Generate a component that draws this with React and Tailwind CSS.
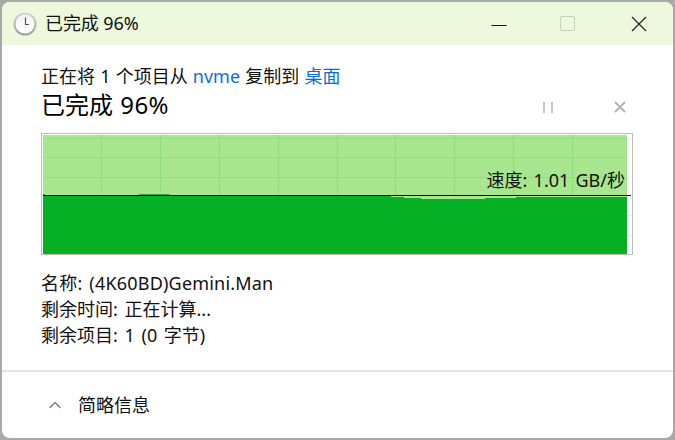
import { ChevronUp } from "lucide-react";

const font = { fontFamily: '"Noto Sans", "Noto Sans CJK SC", sans-serif' };

function Clock() {
  return (
    <svg width="24" height="24" viewBox="0 0 24 24" aria-hidden="true">
      <defs>
        <linearGradient id="rim" x1="0" y1="0" x2="0" y2="1">
          <stop offset="0" stopColor="#d8d8d8" />
          <stop offset="1" stopColor="#9c9c9c" />
        </linearGradient>
        <linearGradient id="face" x1="0" y1="0" x2="0" y2="1">
          <stop offset="0" stopColor="#f2f2f2" />
          <stop offset="1" stopColor="#ffffff" />
        </linearGradient>
      </defs>
      <circle cx="12" cy="12" r="11.5" fill="url(#rim)" />
      <circle cx="12" cy="12" r="9.5" fill="url(#face)" />
      <path d="M12.5 5.5V12.5H16" fill="none" stroke="#555" strokeWidth="1.2" />
    </svg>
  );
}

function Chart() {
  const vLines = [101.5, 160.5, 219.5, 278.5, 337.5, 395.5, 454.5, 513.5, 572.5];
  return (
    <svg width="590" height="120" viewBox="42 134 590 120" className="block" aria-hidden="true">
      <rect x="43" y="135" width="584" height="119" fill="#a9e690" />
      {vLines.map((x) => (
        <line key={x} x1={x} y1="135" x2={x} y2="195" stroke="#8fe07c" strokeWidth="1" />
      ))}
      {[138.5, 157.5, 177.5].map((y) => (
        <line key={y} x1="43" y1={y} x2="627" y2={y} stroke="#8fe07c" strokeWidth="1" />
      ))}
      <path
        d="M43 194H45V196H139V194H170V196H391V197H404V198H421V199H485V198H516V197H627V254H43Z"
        fill="#05b025"
      />
      <rect x="139" y="194" width="31" height="1" fill="#2fa83a" />
      <line x1="43" y1="195.5" x2="631" y2="195.5" stroke="#000" strokeWidth="1" />
      <line x1="627" y1="215.5" x2="632" y2="215.5" stroke="#eeeeee" strokeWidth="1" />
      <line x1="627" y1="235.5" x2="632" y2="235.5" stroke="#eeeeee" strokeWidth="1" />
    </svg>
  );
}

export default function App() {
  return (
    <div className="h-[440px] w-[675px] overflow-hidden bg-[#a9a9a9] p-[2px]" style={font}>
      <div className="flex h-full flex-col overflow-hidden rounded-lg bg-white text-[18px] leading-[26px] text-[#111]">
        <div className="flex h-[43px] shrink-0 items-center bg-[#eef8dc] pl-[11px]">
          <Clock />
          <span className="ml-[8px] -translate-y-[1px] text-[18px] tracking-[-0.1px]">已完成 96%</span>
          <div className="ml-auto flex items-center">
            <svg width="16" height="16" viewBox="0 0 16 16" className="mr-[53px]" aria-hidden="true">
              <line x1="0.5" y1="9.5" x2="15.5" y2="9.5" stroke="#111" strokeWidth="1" />
            </svg>
            <div className="mr-[56px] h-[15px] w-[15px] rounded-[2px] border border-[#c6d2b8]" />
            <svg width="16" height="16" viewBox="0 0 16 16" className="mr-[26px]" aria-hidden="true">
              <path d="M1 1L15 15M15 1L1 15" stroke="#222" strokeWidth="1.2" />
            </svg>
          </div>
        </div>

        <div className="flex flex-1 flex-col pl-[39px] pr-[39px] pt-[18px]">
          <p className="h-[26px] whitespace-nowrap [word-spacing:0.5px]">
            正在将 1 个项目从 <span className="text-[#0a6fd6]">nvme</span> 复制到{" "}
            <span className="text-[#0a6fd6]">桌面</span>
          </p>
          <div className="flex h-[32px] items-center">
            <h1 className="text-[24px] font-normal leading-[30px] text-black [word-spacing:1px]">
              已完成 <span className="tracking-[0.4px]">96%</span>
            </h1>
            <div className="ml-auto flex translate-y-[2px] items-center">
              <div className="mr-[60px] flex gap-[6px]">
                <div className="h-[11px] w-[2px] bg-[#c8c8c8]" />
                <div className="h-[11px] w-[2px] bg-[#c8c8c8]" />
              </div>
              <svg width="14" height="14" viewBox="0 0 14 14" className="mr-[7px]" aria-hidden="true">
                <path d="M2 2L12 12M12 2L2 12" stroke="#b4b4b4" strokeWidth="2" />
              </svg>
            </div>
          </div>

          <div className="relative mt-[12px] h-[122px] w-[592px] border border-[#bdbdbd] bg-white">
            <Chart />
            <span className="absolute right-[7px] top-[33px] whitespace-nowrap text-[18px] leading-[26px] [word-spacing:1.5px]">速度: 1.01 GB/秒</span>
          </div>

          <div className="mt-[15px] leading-[26px] [word-spacing:2px]">
            <p className="tracking-[0.2px]">名称: (4K60BD)Gemini.Man</p>
            <p>剩余时间: 正在计算...</p>
            <p>剩余项目: 1 (0 字节)</p>
          </div>
        </div>

        <div className="flex h-[68px] shrink-0 items-center border-t-2 border-[#e4e4e4] pl-[43px]">
          <ChevronUp size={20} strokeWidth={1.5} color="#777" />
          <span className="ml-[13px] text-[18px]">简略信息</span>
        </div>
      </div>
    </div>
  );
}
